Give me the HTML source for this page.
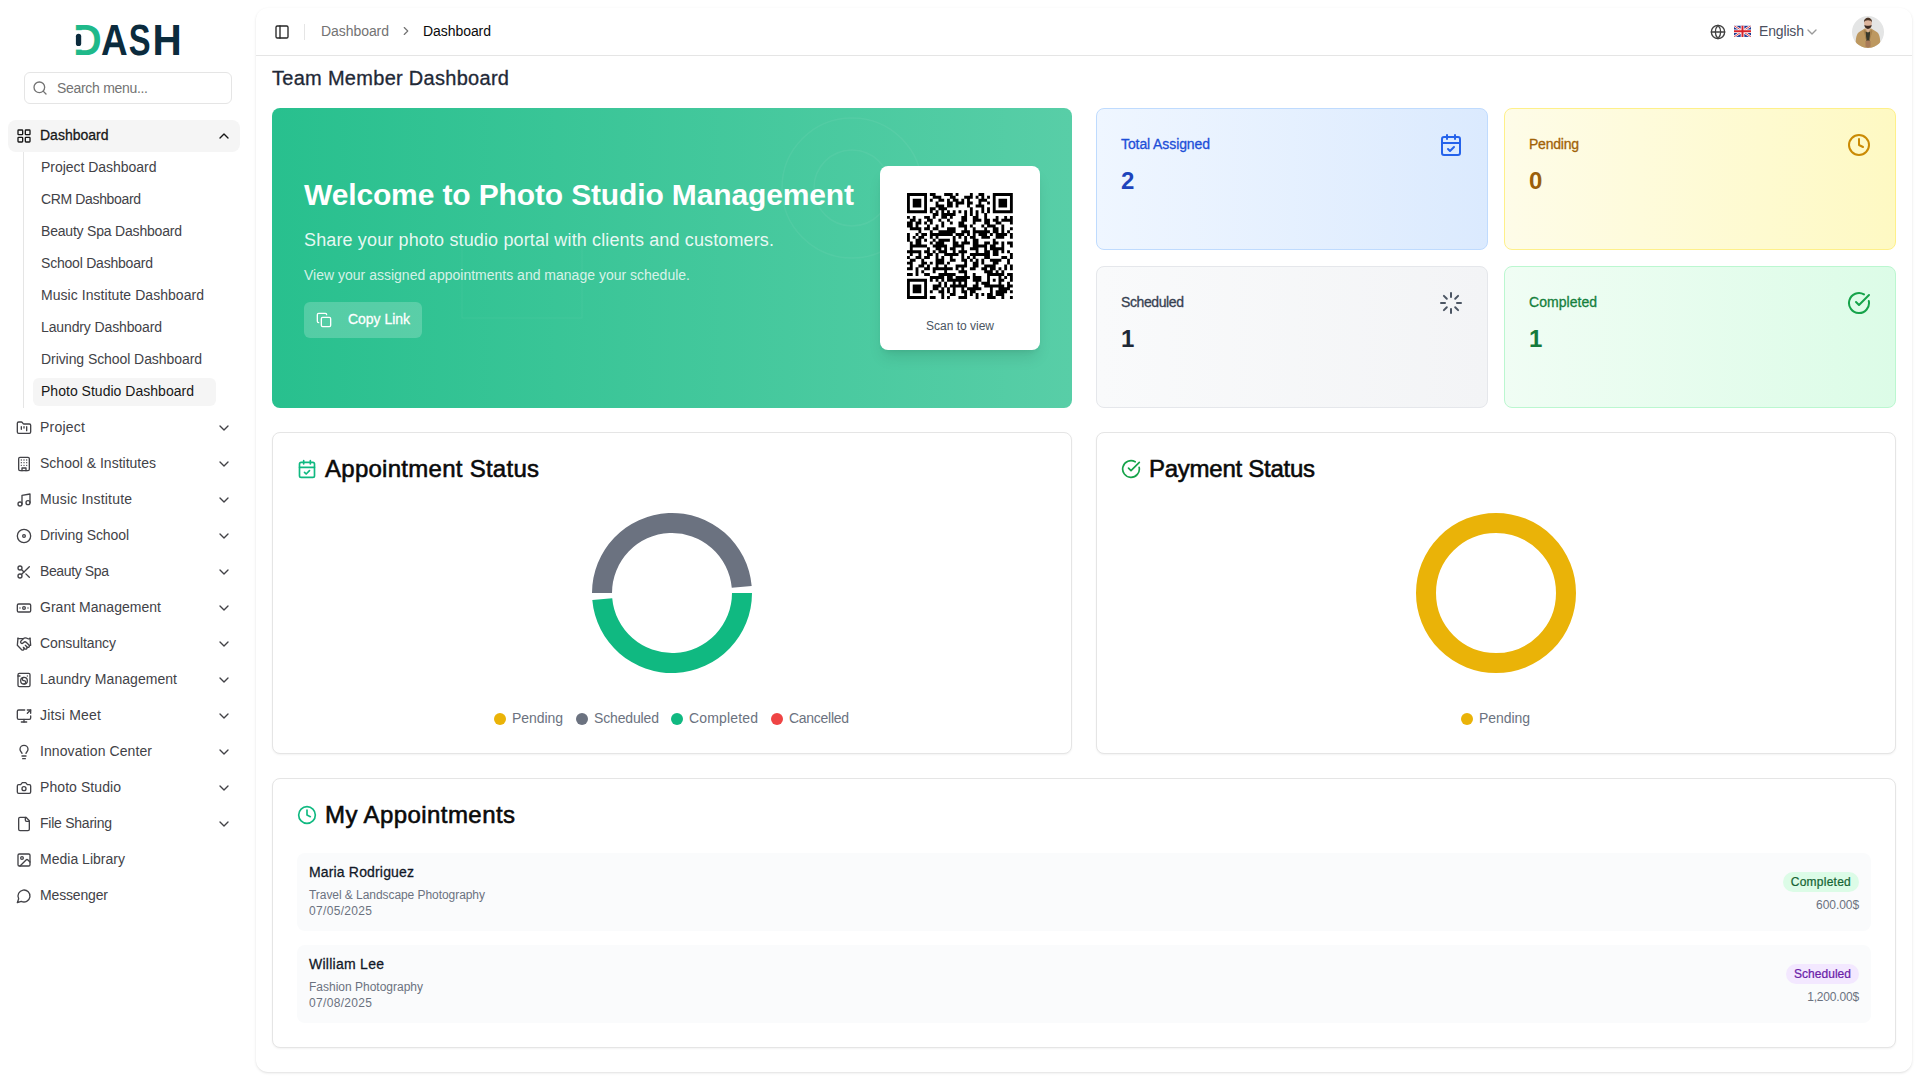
<!DOCTYPE html>
<html lang="en">
<head>
<meta charset="utf-8">
<title>Team Member Dashboard</title>
<style>
*{box-sizing:border-box;margin:0;padding:0}
html,body{width:1920px;height:1080px;overflow:hidden;background:#fff}
body{font-family:"Liberation Sans",sans-serif;color:#0a0a0a;position:relative;font-size:14px;line-height:20px}
svg{display:block}
.ic{fill:none;stroke:currentColor;stroke-width:2;stroke-linecap:round;stroke-linejoin:round}
.abs{position:absolute}
.t{position:absolute;white-space:nowrap}
#sb{position:absolute;left:0;top:0;width:256px;height:1080px;background:#fff}
.mi{position:absolute;left:8px;width:232px;height:32px;border-radius:8px;color:#424247}
.mi svg.i{position:absolute;left:8px;top:8px;width:16px;height:16px}
.mi svg.c{position:absolute;left:208px;top:8px;width:16px;height:16px}
.mi span{position:absolute;left:32px;top:5px;white-space:nowrap;font-size:14px;line-height:20px}
.si{position:absolute;left:33px;width:183px;height:28px;border-radius:6px;color:#424247}
.si span{position:absolute;left:8px;top:3px;white-space:nowrap;font-size:14px;line-height:20px}
#main{position:absolute;left:256px;top:8px;width:1656px;height:1064px;background:#fff;border-radius:12px;box-shadow:0 1px 3px 0 rgba(0,0,0,.1),0 1px 2px -1px rgba(0,0,0,.1)}
#hdr{position:absolute;left:0;top:0;width:1656px;height:48px;border-bottom:1px solid #e5e5e5}
.card{position:absolute;background:#fff;border:1px solid #e5e5e5;border-radius:8px;box-shadow:0 1px 2px 0 rgba(0,0,0,.05)}
.stat{position:absolute;width:392px;height:142px;border-radius:8px;border:1px solid}
.stat .l{position:absolute;left:24px;top:25px;font-size:14px;line-height:20px;white-space:nowrap}
.stat .v{position:absolute;left:24px;top:56px;font-size:24px;line-height:32px;font-weight:bold;white-space:nowrap}
.stat svg{position:absolute;left:342px;top:24px;width:24px;height:24px}
.h2{position:absolute;font-size:24px;line-height:32px;-webkit-text-stroke:.58px;color:#0a0a0a;white-space:nowrap}
.lg{position:absolute;font-size:14px;line-height:20px;color:#6b7280;white-space:nowrap}
.dot{position:absolute;width:12px;height:12px;border-radius:50%}
.row{position:absolute;left:24px;width:1574px;height:78px;background:#fafbfc;border-radius:8px}
.row .n{position:absolute;left:12px;top:9px;font-size:14px;line-height:20px;color:#111827;white-space:nowrap}
.row .s{position:absolute;left:12px;top:34px;font-size:12px;line-height:16px;color:#6b7280;white-space:nowrap}
.row .d{position:absolute;left:12px;top:50px;font-size:12px;line-height:16px;color:#6b7280;white-space:nowrap}
.row .b{position:absolute;right:12px;top:19px;height:20px;padding:2px 8px;border-radius:10px;font-size:12px;line-height:16px;white-space:nowrap}
.row .a{position:absolute;right:12px;top:44px;font-size:12px;line-height:16px;color:#6b7280;white-space:nowrap}
</style>
</head>
<body>
<div id="sb">
<svg class="abs" style="left:60px;top:16px" width="136" height="48" viewBox="60 16 136 48"><text y="55" text-rendering="geometricPrecision" font-family="Liberation Sans, sans-serif" font-size="43.600" font-weight="bold" fill="#0b2b3d"><tspan x="73.270" textLength="28.380" lengthAdjust="spacingAndGlyphs" fill="#1fb98a">D</tspan><tspan x="100.980" textLength="26.700" lengthAdjust="spacingAndGlyphs">A</tspan><tspan x="128.760" textLength="21.820" lengthAdjust="spacingAndGlyphs">S</tspan><tspan x="152.490" textLength="29.240" lengthAdjust="spacingAndGlyphs">H</tspan></text><rect x="74" y="30.200" width="8.600" height="19.400" fill="#fff"/><rect x="75.900" y="33.700" width="5.300" height="12.400" rx="2.650" fill="#0b2b3d"/></svg>

<div class="abs" style="left:24px;top:72px;width:208px;height:32px;border:1px solid #e5e5e5;border-radius:6px;background:#fff"><svg class="ic" style="position:absolute;left:7px;top:7px;width:16px;height:16px;color:#737373" viewBox="0 0 24 24"><circle cx="11" cy="11" r="8"/><path d="m21 21-4.3-4.3"/></svg><span class="t" style="left:32px;top:5px;color:#737373;letter-spacing:-0.303px;">Search menu...</span></div>
<div class="mi" style="top:120px;background:#f5f5f5;color:#171717"><svg class="ic i" viewBox="0 0 24 24"><rect width="7" height="7" x="3" y="3" rx="1"/><rect width="7" height="7" x="14" y="3" rx="1"/><rect width="7" height="7" x="14" y="14" rx="1"/><rect width="7" height="7" x="3" y="14" rx="1"/></svg><span style="-webkit-text-stroke:0.27px;letter-spacing:0.000px;">Dashboard</span><svg class="ic c" viewBox="0 0 24 24"><path d="m18 15-6-6-6 6"/></svg></div>
<div class="abs" style="left:23px;top:152px;width:1px;height:256px;background:#e5e5e5"></div>
<div class="si" style="top:154px;"><span style="letter-spacing:-0.028px;">Project Dashboard</span></div>
<div class="si" style="top:186px;"><span style="letter-spacing:-0.355px;">CRM Dashboard</span></div>
<div class="si" style="top:218px;"><span style="letter-spacing:-0.198px;">Beauty Spa Dashboard</span></div>
<div class="si" style="top:250px;"><span style="letter-spacing:-0.212px;">School Dashboard</span></div>
<div class="si" style="top:282px;"><span style="letter-spacing:0.048px;">Music Institute Dashboard</span></div>
<div class="si" style="top:314px;"><span style="letter-spacing:-0.124px;">Laundry Dashboard</span></div>
<div class="si" style="top:346px;"><span style="letter-spacing:-0.071px;">Driving School Dashboard</span></div>
<div class="si" style="top:378px;background:#f5f5f5;color:#171717;"><span style="letter-spacing:0.021px;">Photo Studio Dashboard</span></div>
<div class="mi" style="top:412px"><svg class="ic i" viewBox="0 0 24 24"><path d="M4 20h16a2 2 0 0 0 2-2V8a2 2 0 0 0-2-2h-7.93a2 2 0 0 1-1.66-.9l-.82-1.2A2 2 0 0 0 7.93 3H4a2 2 0 0 0-2 2v13c0 1.1.9 2 2 2Z"/><path d="M8 10v4"/><path d="M12 10v2"/><path d="M16 10v6"/></svg><span style="letter-spacing:0.237px;">Project</span><svg class="ic c" viewBox="0 0 24 24"><path d="m6 9 6 6 6-6"/></svg></div>
<div class="mi" style="top:448px"><svg class="ic i" viewBox="0 0 24 24"><rect width="16" height="20" x="4" y="2" rx="2" ry="2"/><path d="M9 22v-4h6v4"/><path d="M8 6h.01"/><path d="M16 6h.01"/><path d="M12 6h.01"/><path d="M12 10h.01"/><path d="M12 14h.01"/><path d="M16 10h.01"/><path d="M16 14h.01"/><path d="M8 10h.01"/><path d="M8 14h.01"/></svg><span style="letter-spacing:0.003px;">School &amp; Institutes</span><svg class="ic c" viewBox="0 0 24 24"><path d="m6 9 6 6 6-6"/></svg></div>
<div class="mi" style="top:484px"><svg class="ic i" viewBox="0 0 24 24"><path d="M9 18V5l12-2v13"/><circle cx="6" cy="18" r="3"/><circle cx="18" cy="16" r="3"/></svg><span style="letter-spacing:0.180px;">Music Institute</span><svg class="ic c" viewBox="0 0 24 24"><path d="m6 9 6 6 6-6"/></svg></div>
<div class="mi" style="top:520px"><svg class="ic i" viewBox="0 0 24 24"><circle cx="12" cy="12" r="10"/><circle cx="12" cy="12" r="2"/></svg><span style="letter-spacing:-0.097px;">Driving School</span><svg class="ic c" viewBox="0 0 24 24"><path d="m6 9 6 6 6-6"/></svg></div>
<div class="mi" style="top:556px"><svg class="ic i" viewBox="0 0 24 24"><circle cx="6" cy="6" r="3"/><path d="M8.12 8.12 12 12"/><path d="M20 4 8.12 15.88"/><circle cx="6" cy="18" r="3"/><path d="M14.8 14.8 20 20"/></svg><span style="letter-spacing:-0.377px;">Beauty Spa</span><svg class="ic c" viewBox="0 0 24 24"><path d="m6 9 6 6 6-6"/></svg></div>
<div class="mi" style="top:592px"><svg class="ic i" viewBox="0 0 24 24"><rect width="20" height="12" x="2" y="6" rx="2"/><circle cx="12" cy="12" r="2"/><path d="M6 12h.01M18 12h.01"/></svg><span style="letter-spacing:0.025px;">Grant Management</span><svg class="ic c" viewBox="0 0 24 24"><path d="m6 9 6 6 6-6"/></svg></div>
<div class="mi" style="top:628px"><svg class="ic i" viewBox="0 0 24 24"><path d="m11 17 2 2a1 1 0 1 0 3-3"/><path d="m14 14 2.5 2.5a1 1 0 1 0 3-3l-3.88-3.88a3 3 0 0 0-4.24 0l-.88.88a1 1 0 1 1-3-3l2.81-2.81a5.79 5.79 0 0 1 7.06-.87l.47.28a2 2 0 0 0 1.42.25L21 4"/><path d="m21 3 1 11h-2"/><path d="M3 3 2 14l6.5 6.500a1 1 0 1 0 3-3"/><path d="M3 4h8"/></svg><span style="letter-spacing:-0.105px;">Consultancy</span><svg class="ic c" viewBox="0 0 24 24"><path d="m6 9 6 6 6-6"/></svg></div>
<div class="mi" style="top:664px"><svg class="ic i" viewBox="0 0 24 24"><path d="M3 6h3"/><path d="M17 6h.01"/><rect width="18" height="20" x="3" y="2" rx="2"/><circle cx="12" cy="13" r="5"/><path d="M12 18a2.5 2.5 0 0 0 0-5 2.5 2.5 0 0 1 0-5"/></svg><span style="letter-spacing:0.047px;">Laundry Management</span><svg class="ic c" viewBox="0 0 24 24"><path d="m6 9 6 6 6-6"/></svg></div>
<div class="mi" style="top:700px"><svg class="ic i" viewBox="0 0 24 24"><path d="M13 3H4a2 2 0 0 0-2 2v10a2 2 0 0 0 2 2h16a2 2 0 0 0 2-2v-3"/><path d="M8 21h8"/><path d="M12 17v4"/><path d="m17 8 5-5"/><path d="M17 3h5v5"/></svg><span style="letter-spacing:0.208px;">Jitsi Meet</span><svg class="ic c" viewBox="0 0 24 24"><path d="m6 9 6 6 6-6"/></svg></div>
<div class="mi" style="top:736px"><svg class="ic i" viewBox="0 0 24 24"><path d="M15 14c.2-1 .7-1.700 1.500-2.500 1-.9 1.500-2.200 1.500-3.500A6 6 0 0 0 6 8c0 1 .2 2.200 1.500 3.500.7.700 1.300 1.500 1.500 2.500"/><path d="M9 18h6"/><path d="M10 22h4"/></svg><span style="letter-spacing:0.092px;">Innovation Center</span><svg class="ic c" viewBox="0 0 24 24"><path d="m6 9 6 6 6-6"/></svg></div>
<div class="mi" style="top:772px"><svg class="ic i" viewBox="0 0 24 24"><path d="M14.5 4h-5L7 7H4a2 2 0 0 0-2 2v9a2 2 0 0 0 2 2h16a2 2 0 0 0 2-2V9a2 2 0 0 0-2-2h-3l-2.500-3z"/><circle cx="12" cy="13" r="3"/></svg><span style="letter-spacing:0.075px;">Photo Studio</span><svg class="ic c" viewBox="0 0 24 24"><path d="m6 9 6 6 6-6"/></svg></div>
<div class="mi" style="top:808px"><svg class="ic i" viewBox="0 0 24 24"><path d="M15 2H6a2 2 0 0 0-2 2v16a2 2 0 0 0 2 2h12a2 2 0 0 0 2-2V7Z"/><path d="M14 2v4a2 2 0 0 0 2 2h4"/></svg><span style="letter-spacing:-0.246px;">File Sharing</span><svg class="ic c" viewBox="0 0 24 24"><path d="m6 9 6 6 6-6"/></svg></div>
<div class="mi" style="top:844px"><svg class="ic i" viewBox="0 0 24 24"><rect width="18" height="18" x="3" y="3" rx="2" ry="2"/><circle cx="9" cy="9" r="2"/><path d="m21 15-3.086-3.086a2 2 0 0 0-2.828 0L6 21"/></svg><span style="letter-spacing:0.014px;">Media Library</span></div>
<div class="mi" style="top:880px"><svg class="ic i" viewBox="0 0 24 24"><path d="M7.900 20A9 9 0 1 0 4 16.100L2 22Z"/></svg><span style="letter-spacing:-0.158px;">Messenger</span></div>
</div>
<div id="main">
<div id="hdr">
<svg class="ic" style="position:absolute;left:18px;top:16px;width:16px;height:16px;color:#262626" viewBox="0 0 24 24"><rect width="18" height="18" x="3" y="3" rx="2"/><path d="M9 3v18"/></svg>
<div class="abs" style="left:48px;top:16px;width:1px;height:16px;background:#e5e5e5"></div>
<span class="t" style="left:65px;top:13px;font-size:14px;line-height:20px;color:#737373;letter-spacing:-0.062px;">Dashboard</span>
<svg class="ic" style="position:absolute;left:143px;top:16px;width:14px;height:14px;color:#737373" viewBox="0 0 24 24"><path d="m9 18 6-6-6-6"/></svg>
<span class="t" style="left:167px;top:13px;font-size:14px;line-height:20px;color:#0a0a0a;letter-spacing:-0.062px;">Dashboard</span>
<svg class="ic" style="position:absolute;left:1454px;top:16px;width:16px;height:16px;color:#404040" viewBox="0 0 24 24"><circle cx="12" cy="12" r="10"/><path d="M12 2a14.500 14.500 0 0 0 0 20 14.500 14.500 0 0 0 0-20"/><path d="M2 12h20"/></svg>
<svg class="abs" style="left:1478.300px;top:16.800px" width="17" height="12.500" viewBox="0 0 60 40"><clipPath id="fc"><rect width="60" height="40" rx="3"/></clipPath><g clip-path="url(#fc)"><rect width="60" height="40" fill="#1f3a93"/><path d="M0 0L60 40M60 0L0 40" stroke="#fff" stroke-width="8"/><path d="M0 0L60 40M60 0L0 40" stroke="#d8232a" stroke-width="3"/><path d="M30 0V40M0 20H60" stroke="#fff" stroke-width="13"/><path d="M30 0V40M0 20H60" stroke="#d8232a" stroke-width="7"/></g></svg>

<span class="t" style="left:1503px;top:13px;font-size:14px;line-height:20px;color:#4b5060;letter-spacing:-0.154px;">English</span>
<svg class="ic" style="position:absolute;left:1548px;top:15.500px;width:16px;height:16px;color:#9a9a9a" stroke-width="1.6" viewBox="0 0 24 24"><path d="m6 9 6 6 6-6"/></svg>
<svg class="abs" style="left:1596px;top:8px" width="32" height="32" viewBox="0 0 32 32"><clipPath id="ac"><circle cx="16" cy="16" r="16"/></clipPath><filter id="ab" x="-10%" y="-10%" width="120%" height="120%"><feGaussianBlur stdDeviation=".35"/></filter><g clip-path="url(#ac)"><rect width="32" height="32" fill="#e4e5e5"/><g filter="url(#ab)"><path d="M13.600 11.500h4.800v5h-4.800z" fill="#d9b59a"/><path d="M3.500 32C3.500 22 4.500 17 8 15.500L13.200 12.300L16 17L18.800 12.300L24 15.500C27.500 17 28.500 22 28.500 32Z" fill="#bd9860"/><path d="M13.300 15.500L14.200 26L17.800 26L18.300 15.500L16 16.500Z" fill="#39392a"/><path d="M13.300 13.500L11.500 15L15 27L13.300 15.500ZM18.700 13.500L20.500 15L17 27L18.300 15.500Z" fill="#a8834f"/><ellipse cx="16" cy="6.800" rx="3.900" ry="5" fill="#dcb49c"/><path d="M12 6.500C11.500 .3 20.500 .3 20 6.500C19.500 3.500 12.500 3.500 12 6.500Z" fill="#4a3428"/><path d="M12.300 8.800C12.300 14.300 19.700 14.300 19.700 8.800C18.500 10.200 13.500 10.200 12.300 8.800Z" fill="#3a2a20"/><path d="M13.500 25.500C14.500 24.300 17.500 24.300 18.500 25.500L18.500 30.500C17 32 15 32 13.500 30.500Z" fill="#a87a58"/></g></g></svg>

</div>
<span class="t" style="left:16px;top:56px;font-size:20px;line-height:28px;color:#1f2937;letter-spacing:0.289px;-webkit-text-stroke:.32px;">Team Member Dashboard</span>
<div class="abs" id="hero" style="left:16px;top:100px;width:800px;height:300px;border-radius:8px;background:linear-gradient(90deg,#28c08e 0%,#58cea7 100%);overflow:hidden">
<svg class="abs" style="left:0;top:0" width="800" height="300" viewBox="0 0 800 300" fill="none" stroke="#fff" stroke-opacity=".05"><circle cx="580" cy="80" r="70" stroke-width="1.5"/><circle cx="580" cy="80" r="38" stroke-width="1.5"/><rect x="190" y="130" width="120" height="80" stroke-width="1"/></svg>
<span class="t" style="left:32px;top:67px;font-size:30px;line-height:40px;color:#fff;font-weight:bold;letter-spacing:-0.136px;">Welcome to Photo Studio Management</span>
<span class="t" style="left:32px;top:117.5px;font-size:18px;line-height:28px;color:rgba(255,255,255,.9);letter-spacing:0.136px;">Share your photo studio portal with clients and customers.</span>
<span class="t" style="left:32px;top:157px;font-size:14px;line-height:20px;color:rgba(255,255,255,.8);letter-spacing:0.004px;">View your assigned appointments and manage your schedule.</span>
<div class="abs" style="left:32px;top:194px;width:118px;height:36px;border-radius:6px;background:rgba(255,255,255,.2)"><svg class="ic" style="position:absolute;left:12px;top:10px;width:16px;height:16px;color:#fff" viewBox="0 0 24 24"><rect width="14" height="14" x="8" y="8" rx="2" ry="2"/><path d="M4 16c-1.100 0-2-.9-2-2V4c0-1.100.9-2 2-2h10c1.100 0 2 .9 2 2"/></svg><span class="t" style="left:44px;top:7px;font-size:14px;line-height:20px;color:#fff;-webkit-text-stroke:0.27px;letter-spacing:-0.033px;">Copy Link</span></div>
<div class="abs" style="left:608px;top:58px;width:160px;height:184px;border-radius:8px;background:#fff;box-shadow:0 10px 15px -3px rgba(0,0,0,.1),0 4px 6px -4px rgba(0,0,0,.1)">
<svg class="abs" style="left:26.860px;top:26.860px" width="105.820" height="105.820" viewBox="0 0 37 37"><path fill="#000" d="M0 0h7v1.04h-7zM8 0h2v1.04h-2zM13 0h3v1.04h-3zM17 0h1v1.04h-1zM22 0h1v1.04h-1zM25 0h2v1.04h-2zM30 0h7v1.04h-7zM0 1h1v1.04h-1zM6 1h1v1.04h-1zM9 1h3v1.04h-3zM15 1h2v1.04h-2zM20 1h3v1.04h-3zM24 1h1v1.04h-1zM26 1h1v1.04h-1zM28 1h1v1.04h-1zM30 1h1v1.04h-1zM36 1h1v1.04h-1zM0 2h1v1.04h-1zM2 2h3v1.04h-3zM6 2h1v1.04h-1zM8 2h1v1.04h-1zM11 2h2v1.04h-2zM14 2h1v1.04h-1zM16 2h2v1.04h-2zM19 2h1v1.04h-1zM21 2h1v1.04h-1zM25 2h3v1.04h-3zM30 2h1v1.04h-1zM32 2h3v1.04h-3zM36 2h1v1.04h-1zM0 3h1v1.04h-1zM2 3h3v1.04h-3zM6 3h1v1.04h-1zM10 3h1v1.04h-1zM14 3h2v1.04h-2zM17 3h3v1.04h-3zM21 3h2v1.04h-2zM25 3h1v1.04h-1zM28 3h1v1.04h-1zM30 3h1v1.04h-1zM32 3h3v1.04h-3zM36 3h1v1.04h-1zM0 4h1v1.04h-1zM2 4h3v1.04h-3zM6 4h1v1.04h-1zM10 4h3v1.04h-3zM14 4h2v1.04h-2zM17 4h1v1.04h-1zM21 4h1v1.04h-1zM24 4h3v1.04h-3zM30 4h1v1.04h-1zM32 4h3v1.04h-3zM36 4h1v1.04h-1zM0 5h1v1.04h-1zM6 5h1v1.04h-1zM8 5h2v1.04h-2zM11 5h3v1.04h-3zM22 5h1v1.04h-1zM26 5h1v1.04h-1zM28 5h1v1.04h-1zM30 5h1v1.04h-1zM36 5h1v1.04h-1zM0 6h7v1.04h-7zM8 6h1v1.04h-1zM10 6h1v1.04h-1zM12 6h1v1.04h-1zM14 6h1v1.04h-1zM16 6h1v1.04h-1zM18 6h1v1.04h-1zM20 6h1v1.04h-1zM22 6h1v1.04h-1zM24 6h1v1.04h-1zM26 6h1v1.04h-1zM28 6h1v1.04h-1zM30 6h7v1.04h-7zM9 7h2v1.04h-2zM12 7h5v1.04h-5zM20 7h1v1.04h-1zM22 7h1v1.04h-1zM24 7h1v1.04h-1zM27 7h1v1.04h-1zM0 8h1v1.04h-1zM2 8h1v1.04h-1zM6 8h2v1.04h-2zM9 8h1v1.04h-1zM12 8h2v1.04h-2zM15 8h1v1.04h-1zM19 8h2v1.04h-2zM23 8h2v1.04h-2zM27 8h1v1.04h-1zM31 8h1v1.04h-1zM34 8h1v1.04h-1zM36 8h1v1.04h-1zM1 9h2v1.04h-2zM4 9h1v1.04h-1zM7 9h2v1.04h-2zM11 9h1v1.04h-1zM14 9h1v1.04h-1zM19 9h2v1.04h-2zM23 9h3v1.04h-3zM27 9h2v1.04h-2zM30 9h2v1.04h-2zM33 9h4v1.04h-4zM0 10h2v1.04h-2zM3 10h2v1.04h-2zM6 10h1v1.04h-1zM8 10h1v1.04h-1zM12 10h1v1.04h-1zM15 10h1v1.04h-1zM18 10h2v1.04h-2zM23 10h1v1.04h-1zM27 10h2v1.04h-2zM31 10h2v1.04h-2zM36 10h1v1.04h-1zM0 11h2v1.04h-2zM3 11h1v1.04h-1zM7 11h1v1.04h-1zM10 11h1v1.04h-1zM12 11h1v1.04h-1zM18 11h3v1.04h-3zM22 11h1v1.04h-1zM26 11h1v1.04h-1zM28 11h3v1.04h-3zM33 11h1v1.04h-1zM1 12h4v1.04h-4zM6 12h2v1.04h-2zM9 12h2v1.04h-2zM14 12h3v1.04h-3zM20 12h1v1.04h-1zM23 12h1v1.04h-1zM27 12h1v1.04h-1zM30 12h2v1.04h-2zM33 12h1v1.04h-1zM36 12h1v1.04h-1zM4 13h1v1.04h-1zM8 13h1v1.04h-1zM11 13h6v1.04h-6zM19 13h3v1.04h-3zM23 13h6v1.04h-6zM30 13h2v1.04h-2zM33 13h1v1.04h-1zM35 13h1v1.04h-1zM0 14h1v1.04h-1zM3 14h1v1.04h-1zM5 14h2v1.04h-2zM8 14h8v1.04h-8zM17 14h3v1.04h-3zM21 14h1v1.04h-1zM23 14h1v1.04h-1zM25 14h3v1.04h-3zM29 14h1v1.04h-1zM31 14h4v1.04h-4zM36 14h1v1.04h-1zM0 15h1v1.04h-1zM2 15h1v1.04h-1zM4 15h2v1.04h-2zM8 15h1v1.04h-1zM10 15h1v1.04h-1zM16 15h1v1.04h-1zM18 15h1v1.04h-1zM20 15h1v1.04h-1zM22 15h2v1.04h-2zM26 15h3v1.04h-3zM31 15h3v1.04h-3zM36 15h1v1.04h-1zM0 16h1v1.04h-1zM3 16h2v1.04h-2zM6 16h1v1.04h-1zM9 16h1v1.04h-1zM11 16h4v1.04h-4zM16 16h1v1.04h-1zM20 16h1v1.04h-1zM23 16h2v1.04h-2zM30 16h1v1.04h-1zM1 17h1v1.04h-1zM3 17h2v1.04h-2zM8 17h1v1.04h-1zM10 17h3v1.04h-3zM16 17h2v1.04h-2zM19 17h3v1.04h-3zM23 17h2v1.04h-2zM27 17h2v1.04h-2zM30 17h2v1.04h-2zM33 17h1v1.04h-1zM35 17h2v1.04h-2zM1 18h6v1.04h-6zM9 18h5v1.04h-5zM16 18h4v1.04h-4zM23 18h5v1.04h-5zM29 18h2v1.04h-2zM33 18h1v1.04h-1zM36 18h1v1.04h-1zM1 19h1v1.04h-1zM7 19h1v1.04h-1zM10 19h2v1.04h-2zM13 19h1v1.04h-1zM15 19h2v1.04h-2zM19 19h1v1.04h-1zM22 19h3v1.04h-3zM27 19h1v1.04h-1zM29 19h5v1.04h-5zM0 20h5v1.04h-5zM6 20h2v1.04h-2zM9 20h1v1.04h-1zM11 20h3v1.04h-3zM16 20h1v1.04h-1zM18 20h3v1.04h-3zM24 20h1v1.04h-1zM27 20h2v1.04h-2zM30 20h2v1.04h-2zM33 20h1v1.04h-1zM35 20h1v1.04h-1zM1 21h1v1.04h-1zM4 21h1v1.04h-1zM7 21h2v1.04h-2zM10 21h1v1.04h-1zM13 21h5v1.04h-5zM19 21h1v1.04h-1zM22 21h7v1.04h-7zM30 21h2v1.04h-2zM36 21h1v1.04h-1zM0 22h1v1.04h-1zM3 22h2v1.04h-2zM6 22h2v1.04h-2zM10 22h1v1.04h-1zM12 22h1v1.04h-1zM15 22h1v1.04h-1zM19 22h1v1.04h-1zM21 22h1v1.04h-1zM23 22h1v1.04h-1zM27 22h2v1.04h-2zM33 22h2v1.04h-2zM36 22h1v1.04h-1zM1 23h2v1.04h-2zM5 23h1v1.04h-1zM10 23h3v1.04h-3zM15 23h2v1.04h-2zM19 23h2v1.04h-2zM22 23h1v1.04h-1zM24 23h1v1.04h-1zM26 23h1v1.04h-1zM29 23h4v1.04h-4zM35 23h1v1.04h-1zM0 24h2v1.04h-2zM5 24h2v1.04h-2zM8 24h1v1.04h-1zM10 24h3v1.04h-3zM14 24h1v1.04h-1zM20 24h1v1.04h-1zM23 24h2v1.04h-2zM26 24h1v1.04h-1zM30 24h2v1.04h-2zM35 24h1v1.04h-1zM1 25h1v1.04h-1zM4 25h2v1.04h-2zM7 25h1v1.04h-1zM10 25h1v1.04h-1zM13 25h1v1.04h-1zM17 25h4v1.04h-4zM23 25h2v1.04h-2zM27 25h4v1.04h-4zM34 25h1v1.04h-1zM36 25h1v1.04h-1zM0 26h2v1.04h-2zM3 26h1v1.04h-1zM6 26h2v1.04h-2zM9 26h7v1.04h-7zM17 26h1v1.04h-1zM19 26h1v1.04h-1zM22 26h2v1.04h-2zM26 26h2v1.04h-2zM29 26h2v1.04h-2zM32 26h1v1.04h-1zM34 26h1v1.04h-1zM36 26h1v1.04h-1zM3 27h1v1.04h-1zM5 27h1v1.04h-1zM9 27h1v1.04h-1zM13 27h1v1.04h-1zM18 27h3v1.04h-3zM27 27h3v1.04h-3zM31 27h1v1.04h-1zM33 27h1v1.04h-1zM0 28h2v1.04h-2zM3 28h1v1.04h-1zM6 28h2v1.04h-2zM11 28h6v1.04h-6zM20 28h1v1.04h-1zM23 28h1v1.04h-1zM28 28h6v1.04h-6zM35 28h2v1.04h-2zM8 29h5v1.04h-5zM14 29h2v1.04h-2zM17 29h5v1.04h-5zM23 29h3v1.04h-3zM28 29h1v1.04h-1zM32 29h1v1.04h-1zM34 29h1v1.04h-1zM36 29h1v1.04h-1zM0 30h7v1.04h-7zM8 30h1v1.04h-1zM10 30h1v1.04h-1zM12 30h1v1.04h-1zM14 30h7v1.04h-7zM23 30h3v1.04h-3zM28 30h1v1.04h-1zM30 30h1v1.04h-1zM32 30h2v1.04h-2zM36 30h1v1.04h-1zM0 31h1v1.04h-1zM6 31h1v1.04h-1zM11 31h1v1.04h-1zM13 31h1v1.04h-1zM16 31h1v1.04h-1zM18 31h1v1.04h-1zM20 31h1v1.04h-1zM24 31h1v1.04h-1zM26 31h3v1.04h-3zM32 31h1v1.04h-1zM35 31h1v1.04h-1zM0 32h1v1.04h-1zM2 32h3v1.04h-3zM6 32h1v1.04h-1zM9 32h3v1.04h-3zM13 32h1v1.04h-1zM15 32h6v1.04h-6zM23 32h2v1.04h-2zM27 32h7v1.04h-7zM35 32h2v1.04h-2zM0 33h1v1.04h-1zM2 33h3v1.04h-3zM6 33h1v1.04h-1zM9 33h2v1.04h-2zM12 33h1v1.04h-1zM14 33h1v1.04h-1zM16 33h1v1.04h-1zM19 33h1v1.04h-1zM21 33h5v1.04h-5zM29 33h1v1.04h-1zM32 33h4v1.04h-4zM0 34h1v1.04h-1zM2 34h3v1.04h-3zM6 34h1v1.04h-1zM8 34h1v1.04h-1zM11 34h2v1.04h-2zM14 34h1v1.04h-1zM16 34h1v1.04h-1zM19 34h2v1.04h-2zM22 34h2v1.04h-2zM29 34h1v1.04h-1zM31 34h4v1.04h-4zM36 34h1v1.04h-1zM0 35h1v1.04h-1zM6 35h1v1.04h-1zM12 35h1v1.04h-1zM15 35h2v1.04h-2zM20 35h1v1.04h-1zM22 35h1v1.04h-1zM24 35h1v1.04h-1zM26 35h1v1.04h-1zM28 35h2v1.04h-2zM31 35h3v1.04h-3zM0 36h7v1.04h-7zM8 36h2v1.04h-2zM12 36h1v1.04h-1zM14 36h1v1.04h-1zM18 36h3v1.04h-3zM24 36h1v1.04h-1zM28 36h3v1.04h-3zM33 36h1v1.04h-1zM36 36h1v1.04h-1z"/></svg>
<span class="t" style="left:0;width:160px;text-align:center;top:152px;font-size:12px;line-height:16px;color:#4b5563;letter-spacing:-0.004px;">Scan to view</span>
</div>
</div>
<div class="stat" style="left:840px;top:100px;background:linear-gradient(90deg,#eff6ff,#dbeafe);border-color:#bfdbfe"><span class="l" style="-webkit-text-stroke:.3px;color:#1d4ed8;letter-spacing:-0.100px;">Total Assigned</span><span class="v" style="color:#1e44bc">2</span><svg class="ic" style="color:#2563eb" viewBox="0 0 24 24"><path d="M8 2v4"/><path d="M16 2v4"/><rect width="18" height="18" x="3" y="4" rx="2"/><path d="M3 10h18"/><path d="m9 16 2 2 4-4"/></svg></div>
<div class="stat" style="left:1248px;top:100px;background:linear-gradient(90deg,#fefce8,#fef9c3);border-color:#fef08a"><span class="l" style="-webkit-text-stroke:.3px;color:#a16207;letter-spacing:-0.232px;">Pending</span><span class="v" style="color:#9a5f0a">0</span><svg class="ic" style="color:#ca8a04" viewBox="0 0 24 24"><circle cx="12" cy="12" r="10"/><polyline points="12 6 12 12 16 14"/></svg></div>
<div class="stat" style="left:840px;top:258px;background:linear-gradient(90deg,#f9fafb,#f3f4f6);border-color:#e5e7eb"><span class="l" style="-webkit-text-stroke:.3px;color:#374151;letter-spacing:-0.396px;">Scheduled</span><span class="v" style="color:#1f2937">1</span><svg class="ic" style="color:#4b5563" viewBox="0 0 24 24"><path d="M12 2v4"/><path d="m16.200 7.800 2.900-2.900"/><path d="M18 12h4"/><path d="m16.200 16.200 2.900 2.900"/><path d="M12 18v4"/><path d="m4.900 19.100 2.900-2.900"/><path d="M2 12h4"/><path d="m4.900 4.900 2.900 2.900"/></svg></div>
<div class="stat" style="left:1248px;top:258px;background:linear-gradient(90deg,#f0fdf4,#dcfce7);border-color:#bbf7d0"><span class="l" style="-webkit-text-stroke:.3px;color:#15803d;letter-spacing:0.037px;">Completed</span><span class="v" style="color:#157a3b">1</span><svg class="ic" style="color:#16a34a" viewBox="0 0 24 24"><path d="M21.801 10A10 10 0 1 1 17 3.335"/><path d="m9 11 3 3L22 4"/></svg></div>
<div class="card" style="left:16px;top:424px;width:800px;height:322px">
<svg class="ic" style="position:absolute;left:24px;top:26px;width:20px;height:20px;color:#10b981" viewBox="0 0 24 24"><path d="M8 2v4"/><path d="M16 2v4"/><rect width="18" height="18" x="3" y="4" rx="2"/><path d="M3 10h18"/><path d="m9 16 2 2 4-4"/></svg>
<span class="h2" style="left:52px;top:20px;letter-spacing:0.267px;">Appointment Status</span>
<svg class="abs" style="left:299px;top:60px" width="200" height="200" viewBox="-100 -100 200 200"><path d="M79.696 -6.972A80 80 0 0 0 -80.000 -0.000L-60.000 -0.000A60 60 0 0 1 59.772 -5.229Z" fill="#6b7280"/><path d="M-79.696 6.972A80 80 0 0 0 80.000 0.000L60.000 0.000A60 60 0 0 1 -59.772 5.229Z" fill="#10b981"/></svg>
<div class="dot" style="left:221px;top:280px;background:#eab308"></div>
<span class="lg" style="left:239px;top:275px;letter-spacing:-0.065px;">Pending</span>
<div class="dot" style="left:303px;top:280px;background:#6b7280"></div>
<span class="lg" style="left:321px;top:275px;letter-spacing:-0.146px;">Scheduled</span>
<div class="dot" style="left:398px;top:280px;background:#10b981"></div>
<span class="lg" style="left:416px;top:275px;letter-spacing:0.162px;">Completed</span>
<div class="dot" style="left:498px;top:280px;background:#ef4444"></div>
<span class="lg" style="left:516px;top:275px;letter-spacing:-0.283px;">Cancelled</span>
</div>
<div class="card" style="left:840px;top:424px;width:800px;height:322px">
<svg class="ic" style="position:absolute;left:24px;top:26px;width:20px;height:20px;color:#16a34a" viewBox="0 0 24 24"><path d="M21.801 10A10 10 0 1 1 17 3.335"/><path d="m9 11 3 3L22 4"/></svg>
<span class="h2" style="left:52px;top:20px;letter-spacing:-0.263px;">Payment Status</span>
<svg class="abs" style="left:299px;top:60px" width="200" height="200" viewBox="-100 -100 200 200"><circle r="70" fill="none" stroke="#eab308" stroke-width="20"/></svg>
<div class="dot" style="left:364px;top:280px;background:#eab308"></div>
<span class="lg" style="left:382px;top:275px;letter-spacing:-0.065px;">Pending</span>
</div>
<div class="card" style="left:16px;top:770px;width:1624px;height:270px">
<svg class="ic" style="position:absolute;left:24px;top:26px;width:20px;height:20px;color:#10b981" viewBox="0 0 24 24"><circle cx="12" cy="12" r="10"/><polyline points="12 6 12 12 16 14"/></svg>
<span class="h2" style="left:52px;top:20px;letter-spacing:0.422px;">My Appointments</span>
<div class="row" style="top:74px"><span class="n" style="-webkit-text-stroke:0.27px;letter-spacing:0.163px;">Maria Rodriguez</span><span class="s" style="letter-spacing:-0.058px;">Travel &amp; Landscape Photography</span><span class="d" style="letter-spacing:0.326px;">07/05/2025</span><span class="b" style="background:#dcfce7;color:#166534;-webkit-text-stroke:0.23px;letter-spacing:0.246px;">Completed</span><span class="a" style="letter-spacing:-0.065px;">600.00$</span></div>
<div class="row" style="top:166px"><span class="n" style="-webkit-text-stroke:0.27px;letter-spacing:0.264px;">William Lee</span><span class="s" style="letter-spacing:-0.004px;">Fashion Photography</span><span class="d" style="letter-spacing:0.326px;">07/08/2025</span><span class="b" style="background:#f3e8ff;color:#6b21a8;-webkit-text-stroke:0.23px;letter-spacing:0.035px;">Scheduled</span><span class="a" style="letter-spacing:-0.174px;">1,200.00$</span></div>
</div>
</div>
</body>
</html>
